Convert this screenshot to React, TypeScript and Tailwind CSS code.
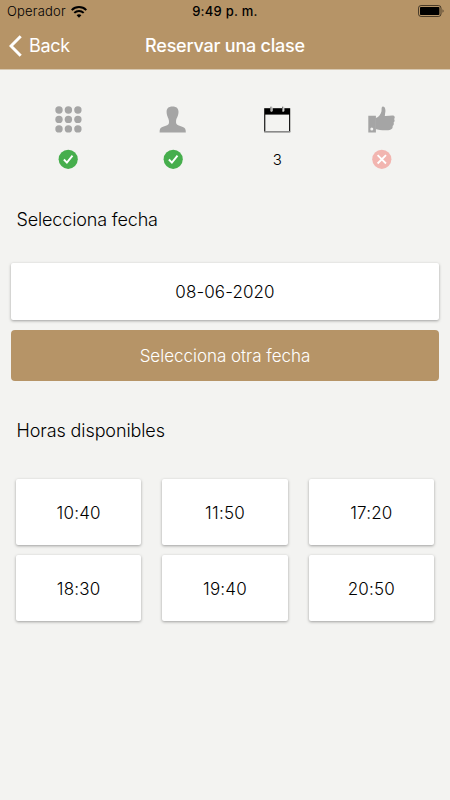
import React, { useState } from 'react';

const HOURS = ['10:40', '11:50', '17:20', '18:30', '19:40', '20:50'];

function WifiIcon() {
  return (
    <svg width="16" height="12" viewBox="0 0 16 12" fill="none" stroke="#000" strokeWidth="2">
      <path d="M0.7 4.1C4.8 0.1 11.2 0.1 15.3 4.1" />
      <path d="M3.3 6.9C6 4.3 10 4.3 12.7 6.9" />
      <path d="M8 11.8L5.6 9.3C7 8 9 8 10.4 9.3Z" fill="#000" stroke="none" />
    </svg>
  );
}

function BatteryIcon() {
  return (
    <svg width="26" height="12" viewBox="0 0 26 12">
      <rect x="0.5" y="0.5" width="22.5" height="11" rx="2.6" fill="none" stroke="#000" strokeOpacity="0.6" />
      <rect x="2" y="2" width="19.4" height="8" rx="0.8" fill="#000" />
      <path d="M24.6 4.3C25.8 4.8 25.8 7.2 24.6 7.7Z" fill="#000" fillOpacity="0.7" />
    </svg>
  );
}

function GridIcon() {
  const dots = [4, 13.4, 22.9];
  return (
    <svg width="27" height="27" viewBox="0 0 27 27" fill="#a5a5a5">
      {dots.map(y => dots.map(x => <circle key={`${x}-${y}`} cx={x} cy={y} r="3.7" />))}
    </svg>
  );
}

function PersonIcon() {
  return (
    <svg width="27" height="27" viewBox="0 0 27 27" fill="#a5a5a5">
      <path d="M13.5 0.4C17.7 0.4 19.5 2.6 19.5 5.8C19.5 10.2 17.5 11.8 17.1 14.6C16.8 17.4 17.2 18.4 19.2 19.2L23.8 20.9C26.1 21.7 26.8 23 26.8 26.4H0.6C0.6 23 1.2 21.7 3.3 20.9L8.1 19.2C10 18.4 10.2 17.4 9.9 14.6C9.6 11.8 7.6 10.2 7.6 5.8C7.6 2.6 9.3 0.4 13.5 0.4Z" />
    </svg>
  );
}

function CalendarIcon() {
  return (
    <svg width="27" height="27" viewBox="0 0 27 27">
      <rect x="0.2" y="2.2" width="26" height="24" fill="#000" />
      <rect x="1.3" y="8.6" width="23.8" height="16.4" fill="#f3f3f1" />
      <rect x="0.2" y="25" width="26" height="1.3" fill="#8a8a8a" />
      <rect x="6.3" y="0.4" width="2.4" height="5.4" rx="1.2" fill="#d8d8d6" />
      <rect x="18" y="0.4" width="2.4" height="5.4" rx="1.2" fill="#d8d8d6" />
      <path d="M6.9 0.7V4.8M18.6 0.7V4.8" stroke="#555" strokeWidth="0.8" />
    </svg>
  );
}

function ThumbIcon() {
  return (
    <svg width="27" height="27" viewBox="0 0 27 27" fill="#a5a5a5">
      <path fillRule="evenodd" d="M0.3 9.8H7.9V26.4H0.3ZM3.8 21.4A1.5 1.5 0 1 0 3.8 24.4A1.5 1.5 0 1 0 3.8 21.4Z" />
      <path d="M7.5 12.2C11.3 10.6 12.8 8.1 13.5 5.2C13.8 3.4 13.2 1 14.6 0.5C16.8-0.1 17.6 3 17.4 5.5C17.3 7.2 16.8 8.6 16.8 9.9C19.5 10 22.6 9.5 25.1 9.6C27 9.9 27.1 12 26.1 13C26.9 14.1 26.7 15.9 25.6 16.5C26.1 17.9 25.7 19.3 24.6 20C24.9 21.5 24.1 22.9 22.8 23.4C19.3 25 11.5 24.3 7.5 23Z" />
    </svg>
  );
}

function DoneBadge() {
  return (
    <svg width="20" height="20" viewBox="0 0 20 20">
      <circle cx="10.2" cy="10.3" r="9.6" fill="#46ae4d" />
      <path d="M5.9 10.5L8.9 13.6L14.5 6.7" fill="none" stroke="#fff" strokeWidth="1.9" />
    </svg>
  );
}

function PendingBadge() {
  return (
    <svg width="20" height="20" viewBox="0 0 20 20">
      <circle cx="9.8" cy="10.3" r="9.6" fill="#f2b5b0" />
      <path d="M5.6 6.1L14 14.5M14 6.1L5.6 14.5" stroke="#fff" strokeWidth="1.8" />
    </svg>
  );
}

function Step({ icon, children }: { icon: React.ReactNode; children: React.ReactNode }) {
  return (
    <div className="flex flex-col items-center">
      {icon}
      <div className="mt-4 flex h-5 items-center justify-center text-[15px]">{children}</div>
    </div>
  );
}

export default function App() {
  const [date] = useState('08-06-2020');

  return (
    <div className="flex h-[800px] w-[450px] flex-col overflow-hidden bg-[#f3f3f1] font-['Inter',sans-serif] text-black">
      <header className="h-[69px] bg-[#b69467] shadow-[0_1px_0_0_#d8c9b2]">
        <div className="grid h-[23px] grid-cols-3 items-center pr-[6px] pl-[7px]">
          <div className="flex items-center gap-[5px] text-[13px] font-light tracking-[0.2px]">
            <span>Operador</span>
            <WifiIcon />
          </div>
          <span className="pr-px text-center text-[13px] font-medium tracking-[0.25px]">9:49 p. m.</span>
          <div className="flex justify-end pb-px">
            <BatteryIcon />
          </div>
        </div>
        <div className="grid h-[45px] grid-cols-[100px_1fr_100px] items-center text-[18px] text-white">
          <button className="flex items-center gap-[7px] pl-[9px]">
            <svg width="13" height="22" viewBox="0 0 13 22" fill="none" stroke="#fff" strokeWidth="3">
              <path d="M11.7 1.2L2 11L11.7 20.8" />
            </svg>
            <span className="tracking-[-0.3px]">Back</span>
          </button>
          <h1 className="text-center font-medium tracking-[-0.22px]">Reservar una clase</h1>
        </div>
      </header>

      <div className="grid grid-cols-4 px-4 pt-[37px]">
        <Step icon={<GridIcon />}><DoneBadge /></Step>
        <Step icon={<PersonIcon />}><DoneBadge /></Step>
        <Step icon={<CalendarIcon />}><span className="pt-0.5 font-light">3</span></Step>
        <Step icon={<ThumbIcon />}><PendingBadge /></Step>
      </div>

      <h2 className="mt-[37px] pl-[16.5px] text-lg leading-7 font-light tracking-[-0.15px]">Selecciona fecha</h2>

      <div className="mt-[29px] flex flex-col gap-[10px] px-[11px]">
        <div className="flex h-[57px] items-center justify-center rounded-[2px] bg-white pt-0.5 text-[17px] font-light tracking-[0.1px] shadow-[0_1px_3px_rgba(0,0,0,0.35)]">
          {date}
        </div>
        <button className="h-[51px] rounded bg-[#b69467] pt-[3px] text-[17px] font-light tracking-[-0.02px] text-white">
          Selecciona otra fecha
        </button>
      </div>

      <h2 className="mt-[36px] pl-[16.5px] text-lg leading-7 font-light tracking-[-0.1px]">Horas disponibles</h2>

      <div className="mt-[34px] grid grid-cols-3 gap-x-[21px] gap-y-[10px] px-4">
        {HOURS.map(hour => (
          <button
            key={hour}
            className="h-[66px] rounded-[2px] bg-white pt-[3px] text-[17px] font-light tracking-[0.2px] shadow-[0_1px_3px_rgba(0,0,0,0.35)]"
          >
            {hour}
          </button>
        ))}
      </div>
    </div>
  );
}
